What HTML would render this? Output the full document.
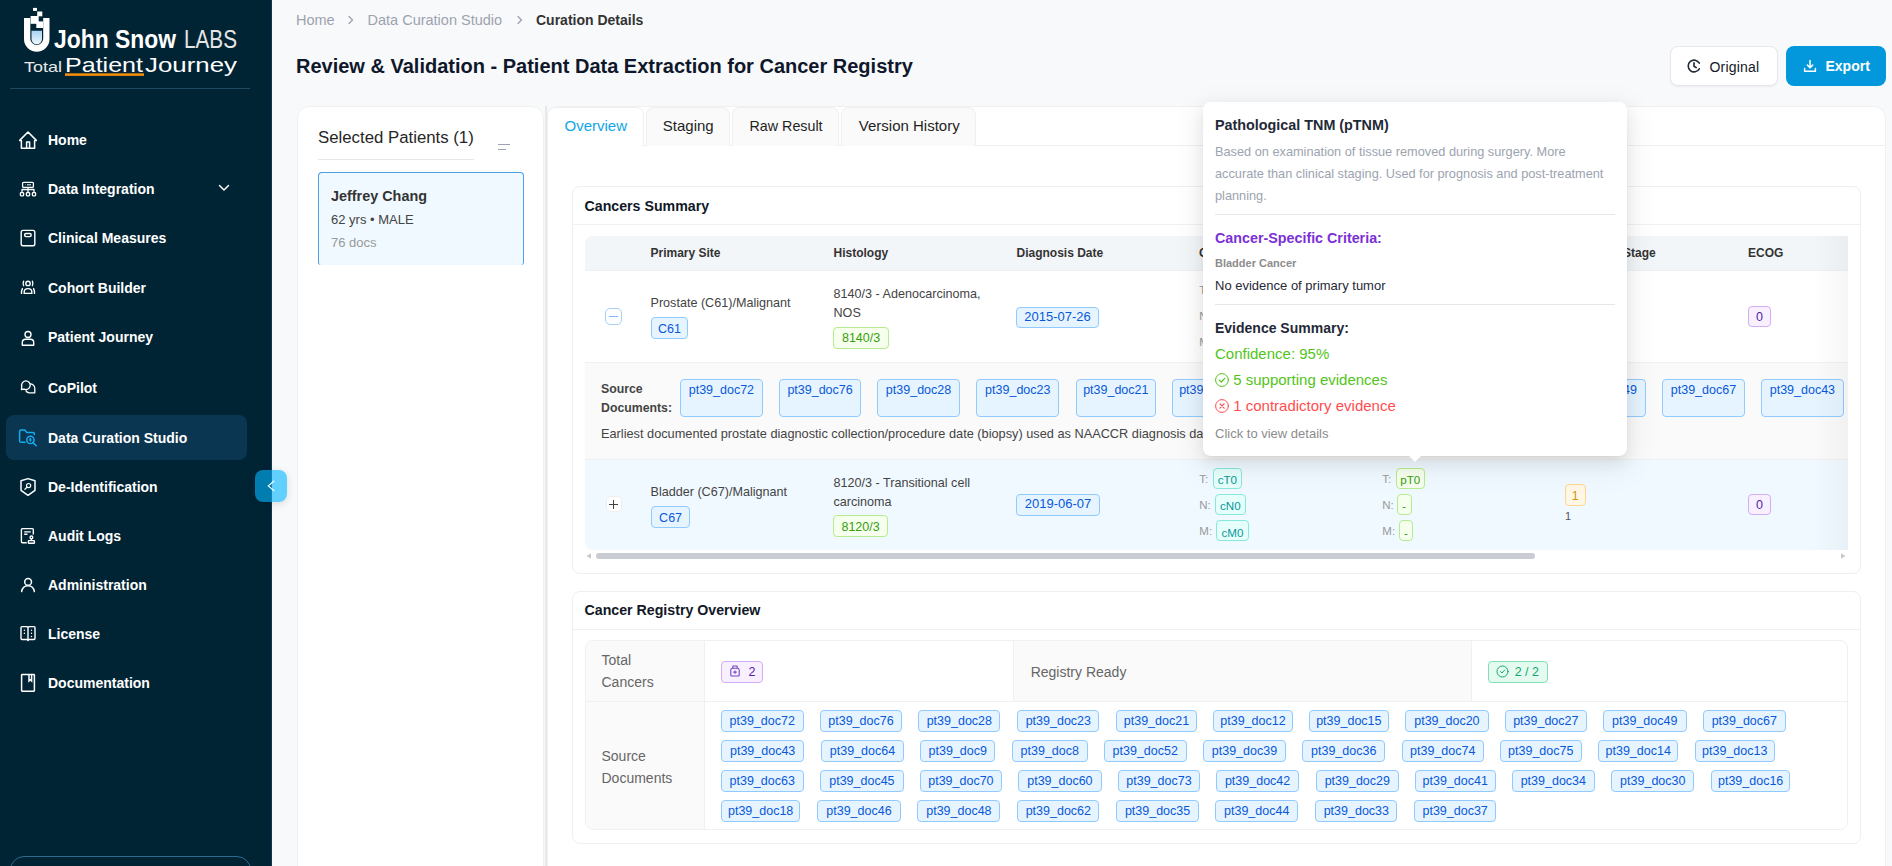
<!DOCTYPE html>
<html><head><meta charset="utf-8">
<style>
*{box-sizing:border-box;margin:0;padding:0}
html,body{width:1892px;height:866px;overflow:hidden}
body{font-family:"Liberation Sans",sans-serif;background:#f8f9fb;position:relative;color:#333}
.a{position:absolute;white-space:nowrap;line-height:1}
#sb{position:absolute;left:0;top:0;width:272px;height:866px;background:#012435;border-right:1px solid #0d3a52}
.mi{position:absolute;left:48px;font-size:14px;font-weight:700;color:#fff}
.ic{position:absolute;left:19px;width:18px;height:18px}
/* SIDEBAR-END */
.bc{font-size:14.5px;color:#9ca3af}
.card{position:absolute;background:#fff;border:1px solid #efefef}
.tab{position:absolute;top:107px;height:39px;border:1px solid #f0f0f0;border-bottom:none;border-radius:8px 8px 0 0;background:#fafafa;font-size:15px;color:#1f1f1f}
.tab span{position:absolute;top:10.3px;line-height:1}

.tg{position:absolute;border:1px solid;border-radius:4px;font-size:12.5px;line-height:19.5px;padding-top:1.3px;text-align:center;white-space:nowrap;overflow:hidden}
.tb{background:#e6f4ff;border-color:#91caff;color:#0958d9}
.tgn{background:#f6ffed;border-color:#b7eb8f;color:#389e0d}
.tgc{background:#e6fffb;border-color:#87e8de;color:#08979c}
.tgo{background:#fff7e6;border-color:#ffd591;color:#d46b08}
.tgp{background:#f9f0ff;border-color:#d3adf7;color:#531dab}
.tgg{background:#e6fbf0;border-color:#80e0b4;color:#0fa86e}
.th{font-size:12px;font-weight:700;color:#333}
.td{font-size:12.6px;color:#444}
.lb{font-size:11.5px;color:#999}
.tgc,.tgs{font-size:11.6px}
.sdl{font-size:12.3px;font-weight:700;color:#444}
.rl{font-size:14px;color:#666}
/* MAIN-CSS */

</style></head><body>
<div id="sb">
  <svg class="a" style="left:0;top:0" width="272" height="90" viewBox="0 0 272 90">
    <defs><linearGradient id="tg" x1="0" y1="0" x2="0" y2="1"><stop offset="0" stop-color="#a9d4f2"/><stop offset="1" stop-color="#eef8fd"/></linearGradient></defs>
    <path d="M24 18 H30.3 V38.5 A6.45 6.45 0 0 0 43.2 38.5 V18 H49.5 V39 A12.75 12.75 0 0 1 24 39 Z" fill="#fff"/>
    <path d="M31.5 30.7 H42 V39 A5.25 5.25 0 0 1 31.5 39 Z" fill="url(#tg)"/>
    <rect x="33" y="7.9" width="4" height="3" fill="#fff"/>
    <rect x="37.2" y="11.5" width="5.1" height="4.8" fill="#fff"/>
    <rect x="30.6" y="16" width="8.1" height="7.8" fill="#fff"/>
    <rect x="36.3" y="21.4" width="6.7" height="6.6" fill="#fff"/>
    <text x="54" y="48" font-family="Liberation Sans" font-weight="700" font-size="26" fill="#fff" textLength="122" lengthAdjust="spacingAndGlyphs">John Snow</text>
    <text x="184" y="48" font-family="Liberation Sans" font-weight="400" font-size="26" fill="#e6e6e6" textLength="53" lengthAdjust="spacingAndGlyphs">LABS</text>
    <text x="24" y="72" font-family="Liberation Sans" font-size="15" fill="#e8e8e8" textLength="38" lengthAdjust="spacingAndGlyphs">Total</text>
    <text x="65" y="72" font-family="Liberation Sans" font-size="21" fill="#fff" textLength="78" lengthAdjust="spacingAndGlyphs">Patient</text>
    <text x="145" y="72" font-family="Liberation Sans" font-size="21" fill="#fff" textLength="92" lengthAdjust="spacingAndGlyphs">Journey</text>
    <rect x="65" y="73.3" width="79" height="2.6" fill="#f28b0c"/>
    <rect x="10" y="88" width="240" height="1" fill="#1b4a62"/>
  </svg>
  <div class="a" style="left:6px;top:415px;width:241px;height:45px;border-radius:8px;background:#0b3651"></div>
  <div class="a mi" style="top:133px">Home</div>
  <div class="a mi" style="top:182px">Data Integration</div>
  <div class="a mi" style="top:231px">Clinical Measures</div>
  <div class="a mi" style="top:281px">Cohort Builder</div>
  <div class="a mi" style="top:330px">Patient Journey</div>
  <div class="a mi" style="top:381px">CoPilot</div>
  <div class="a mi" style="top:431px">Data Curation Studio</div>
  <div class="a mi" style="top:480px">De-Identification</div>
  <div class="a mi" style="top:529px">Audit Logs</div>
  <div class="a mi" style="top:578px">Administration</div>
  <div class="a mi" style="top:627px">License</div>
  <div class="a mi" style="top:676px">Documentation</div>

  <svg class="a" style="left:14px;top:126px" width="30" height="30" fill="none" stroke="#fff" stroke-width="1.5" stroke-linejoin="round"><path d="M5.7 14.4 L14 6 L22.3 14.4 H20.6 V22.2 H7.4 V14.4 Z"/><path d="M12.6 22.4 V16 H15.6 V22.4"/></svg>
  <svg class="a" style="left:14px;top:175px" width="30" height="30" fill="none" stroke="#fff" stroke-width="1.4" stroke-linejoin="round"><rect x="8.6" y="7.3" width="10.8" height="5" rx="0.9" stroke-width="1.3"/><path d="M11.2 9.8 H11.7 M13 9.8 H17" stroke-width="1"/><path d="M14 12.3 V17.6 M8 17.6 V14.5 H20 V17.6" stroke-width="1.3"/><rect x="6.4" y="17.6" width="3.2" height="3.2" rx="0.7" stroke-width="1.3"/><rect x="12.4" y="17.6" width="3.2" height="3.2" rx="0.7" stroke-width="1.3"/><rect x="18.4" y="17.6" width="3.2" height="3.2" rx="0.7" stroke-width="1.3"/></svg>
  <svg class="a" style="left:14px;top:224px" width="30" height="30" fill="none" stroke="#fff" stroke-width="1.4"><rect x="7.2" y="6.4" width="13.6" height="15.3" rx="1.8"/><rect x="10.6" y="9.5" width="6.6" height="3.1" rx="1.5"/></svg>
  <svg class="a" style="left:14px;top:273px" width="30" height="30" fill="none" stroke="#fff" stroke-width="1.4" stroke-linecap="round"><circle cx="14" cy="10.4" r="2.2"/><path d="M9.6 8.2 Q8.6 10.4 9.6 12.6 M18.4 8.2 Q19.4 10.4 18.4 12.6"/><path d="M10.2 20.4 V19 Q10.2 15.6 14 15.6 Q17.8 15.6 17.8 19 V20.4 Z"/><path d="M8.4 15.6 Q7.4 17.5 7.5 20.4 M19.6 15.6 Q20.6 17.5 20.5 20.4"/></svg>
  <svg class="a" style="left:14px;top:322px" width="30" height="30" fill="none" stroke="#fff" stroke-width="1.4" stroke-linejoin="round"><circle cx="14" cy="12.5" r="3"/><path d="M8.3 23.3 V20.6 Q8.3 17.2 11.6 17.2 H16.4 Q19.7 17.2 19.7 20.6 V23.3 Z"/></svg>
  <svg class="a" style="left:14px;top:373px" width="30" height="30" fill="none" stroke="#fff" stroke-width="1.3" stroke-linejoin="round"><path d="M7.4 16.5 L7.8 13.5 A4.3 4.3 0 1 1 10.3 16.2 Z"/><path d="M15.8 10.8 A4.6 4.6 0 0 1 20.8 15.2 L20.8 19.8 L16.5 19.8 A4.6 4.6 0 0 1 11.6 17.4"/></svg>
  <svg class="a" style="left:14px;top:423px" width="30" height="30" fill="none" stroke="#14aef0" stroke-width="1.5" stroke-linecap="round" stroke-linejoin="round"><path d="M11 19.3 H7.2 Q5.6 19.3 5.6 17.7 V8.6 Q5.6 7 7.2 7 H10.8 L12.6 9.4 H18.8 Q20.4 9.4 20.4 11 V11.6"/><circle cx="16.4" cy="16.9" r="3.6"/><path d="M19 19.6 L22.2 22.8"/><path d="M16.4 15.2 L17.2 16.9 L16.4 18.6 L15.6 16.9 Z" fill="#14aef0" stroke-width="0.8"/></svg>
  <svg class="a" style="left:14px;top:472px" width="30" height="30" fill="none" stroke="#fff" stroke-width="1.5" stroke-linejoin="round"><path d="M14 6.6 L21 8.7 V18.3 L14 23.3 L7 18.3 V8.7 Z"/><circle cx="14.6" cy="13.6" r="2.1" stroke-width="1.2"/><path d="M13 15.3 L10.9 17.3" stroke-width="1.2" stroke-linecap="round"/></svg>
  <svg class="a" style="left:14px;top:521px" width="30" height="30" fill="none" stroke="#fff" stroke-width="1.4"><path d="M19.3 13.6 V8.6 Q19.3 7.6 18.3 7.6 H8.4 Q7.4 7.6 7.4 8.6 V20.8 Q7.4 21.8 8.4 21.8 H12.8"/><path d="M10.2 10.9 H16.8 M10.2 13.3 H13.5"/><circle cx="17.4" cy="16.4" r="1.4"/><path d="M17.4 17.8 V19.4"/><rect x="14.4" y="19.6" width="6" height="2.7" rx="0.5"/></svg>
  <svg class="a" style="left:14px;top:570px" width="30" height="30" fill="none" stroke="#fff" stroke-width="1.5" stroke-linecap="round"><circle cx="14.1" cy="11.9" r="3.4"/><path d="M7.6 21.6 Q8.6 15.7 14 15.7 Q19.4 15.7 20.4 21.6"/></svg>
  <svg class="a" style="left:14px;top:619px" width="30" height="30" fill="none" stroke="#fff" stroke-width="1.4" stroke-linejoin="round"><path d="M7 8.5 Q7 7.6 8 7.6 H12.8 L14 8.3 L15.2 7.6 H20 Q21 7.6 21 8.5 V19.6 Q21 20.5 20 20.5 H15 L14 21.4 L13 20.5 H8 Q7 20.5 7 19.6 Z M14 8.3 V21"/><path d="M10.4 11.1 V11.3 M10.4 14.2 V14.4 M17.5 11.1 V11.3 M17.5 14.2 V14.4 M17.5 17.3 V17.5" stroke-linecap="round" stroke-width="1.3"/></svg>
  <svg class="a" style="left:14px;top:668px" width="30" height="30" fill="none" stroke="#fff" stroke-width="1.5"><rect x="7.6" y="6.6" width="12.8" height="16.6" rx="0.6"/><path d="M15 6.8 V13 L16.3 11.8 L17.6 13 V6.8"/></svg>
  <svg class="a" style="left:216px;top:182px" width="16" height="12" fill="none" stroke="#fff" stroke-width="1.5" stroke-linecap="round" stroke-linejoin="round"><path d="M3.5 3.5 L8 8 L12.5 3.5"/></svg>
  <div class="a" style="left:255px;top:470px;width:32px;height:32px;border-radius:8px;background:rgba(4,181,255,0.61);box-shadow:0 2px 8px rgba(0,0,0,0.12)"><svg width="32" height="32" fill="none" stroke="#fff" stroke-width="1.2" stroke-linecap="round" stroke-linejoin="round"><path d="M18.8 11.2 L13.2 15.9 L18.8 20.5"/></svg></div>
  <div class="a" style="left:10px;top:856px;width:241px;height:40px;border:1px solid #2d6a8e;border-radius:14px"></div>
</div>
<!-- MAIN -->
<div class="a bc" style="left:296px;top:13px">Home</div>
<svg class="a" style="left:344px;top:13px" width="14" height="14" fill="none" stroke="#9ca3af" stroke-width="1.3" stroke-linecap="round" stroke-linejoin="round"><path d="M5 3.5 L8.5 7 L5 10.5"/></svg>
<div class="a bc" style="left:367.5px;top:13px">Data Curation Studio</div>
<svg class="a" style="left:513px;top:13px" width="14" height="14" fill="none" stroke="#9ca3af" stroke-width="1.3" stroke-linecap="round" stroke-linejoin="round"><path d="M5 3.5 L8.5 7 L5 10.5"/></svg>
<div class="a" style="left:536px;top:13px;font-size:14px;font-weight:700;color:#333">Curation Details</div>
<div class="a" style="left:296px;top:56px;font-size:20px;font-weight:700;color:#0f172a">Review &amp; Validation - Patient Data Extraction for Cancer Registry</div>
<div class="a" style="left:1670px;top:46px;width:107.5px;height:39.5px;background:#fff;border:1px solid #e5e7eb;border-radius:8px;box-shadow:0 1px 2px rgba(0,0,0,0.05)">
  <svg class="a" style="left:15px;top:11px" width="16" height="16" fill="none" stroke="#1f2937" stroke-width="1.6" stroke-linecap="round"><path d="M13.3 5.2 A5.9 5.9 0 1 0 13.3 10.8"/><path d="M8 4.8 V8.3 L10.2 9.6"/></svg>
  <div class="a" style="left:38.5px;top:13px;font-size:14px;font-weight:400;color:#111827;letter-spacing:0.2px">Original</div>
</div>
<div class="a" style="left:1786px;top:46px;width:100px;height:39.5px;background:#0398db;border-radius:8px">
  <svg class="a" style="left:16px;top:12px" width="16" height="16" fill="none" stroke="#fff" stroke-width="1.5" stroke-linecap="round" stroke-linejoin="round"><path d="M8 2.5 V9.5 M5.3 7 L8 9.7 L10.7 7"/><path d="M2.6 10.5 V13.3 H13.4 V10.5"/></svg>
  <div class="a" style="left:39.5px;top:13px;font-size:14px;font-weight:700;color:#fff">Export</div>
</div>
<!-- patient panel -->
<div class="card" style="left:296.8px;top:106px;width:247.7px;height:800px;border-radius:12px;border-color:#f0f0f0"></div>
<div class="a" style="left:318px;top:130px;font-size:16.8px;color:#262626">Selected Patients (1)</div>
<div class="a" style="left:318px;top:158.5px;width:156px;height:1px;background:#e5e7eb"></div>
<div class="a" style="left:498px;top:144px;width:12px;height:1.3px;background:#9aa4b2"></div>
<div class="a" style="left:498px;top:148.7px;width:8px;height:1.3px;background:#9aa4b2"></div>
<div class="a" style="left:318px;top:172px;width:206px;height:93px;background:#f0f9ff;border:1px solid #4a9fe6;border-bottom:none;border-radius:4px 4px 3px 3px"></div>
<div class="a" style="left:331px;top:189px;font-size:14.4px;font-weight:700;color:#333">Jeffrey Chang</div>
<div class="a" style="left:331px;top:212.6px;font-size:13px;color:#444">62 yrs &bull; MALE</div>
<div class="a" style="left:331px;top:236px;font-size:13px;color:#999">76 docs</div>
<div class="a" style="left:545px;top:106px;width:1.5px;height:760px;background:#e6e8eb"></div>
<!-- tabs card -->
<div class="card" style="left:547px;top:106px;width:1339px;height:800px;border-radius:12px;border-color:#f0f0f0"></div>
<div class="a" style="left:547px;top:145px;width:1338px;height:1px;background:#f0f0f0"></div>
<div class="tab" style="left:547px;width:97px;background:#fff;border-color:#f0f0f0;height:40px"><span style="left:16.5px;color:#0ea5e9">Overview</span></div><div class="a" style="left:548px;top:145px;width:95px;height:2px;background:#fff"></div>
<div class="tab" style="left:646px;width:84px"><span style="left:15.8px">Staging</span></div>
<div class="tab" style="left:732px;width:107px"><span style="left:16.5px;font-size:14.3px;top:10.9px">Raw Result</span></div>
<div class="tab" style="left:841px;width:135px"><span style="left:16.8px">Version History</span></div>
<!-- CONTENT-START -->
<div class="card" style="left:571.5px;top:186px;width:1289px;height:387.5px;border-radius:8px"></div>
<div class="a" style="left:584.5px;top:198.5px;font-size:14.2px;font-weight:700;color:#111827">Cancers Summary</div>
<div class="a" style="left:572.5px;top:224px;width:1287px;height:1px;background:#f0f0f0"></div>
<div class="a" style="left:584.5px;top:236.3px;width:1263.5px;height:313.7px;overflow:hidden;border-radius:8px 0 0 8px">
<div class="a" style="left:0;top:0;width:1263.5px;height:35.2px;background:#f3f6f9;border-bottom:1px solid #eef0f2"></div>
<div class="a th" style="left:66.0px;top:10.7px">Primary Site</div>
<div class="a th" style="left:249.0px;top:10.7px">Histology</div>
<div class="a th" style="left:432.0px;top:10.7px">Diagnosis Date</div>
<div class="a th" style="left:614.5px;top:10.7px">Clinical TNM</div>
<div class="a th" style="left:797.5px;top:10.7px">Pathological TNM</div>
<div class="a th" style="left:980.5px;top:10.7px">Summary Stage</div>
<div class="a th" style="left:1163.5px;top:10.7px">ECOG</div>
<div class="a" style="left:0;top:35.2px;width:1263.5px;height:91.5px;background:#fff;border-bottom:1px solid #f0f0f0"></div>
<div class="a" style="left:20.8px;top:71.7px;width:16.5px;height:16.6px;border:1px solid #a8cffc;border-radius:5px;background:#fff"><div class="a" style="left:2.8px;top:7.2px;width:9px;height:1.3px;background:#80b6f6"></div></div>
<div class="a td" style="left:66.0px;top:60.7px">Prostate (C61)/Malignant</div>
<div class="tg tb" style="left:66.5px;top:81.0px;width:37px;height:21.5px;">C61</div>
<div class="a td" style="left:249.0px;top:52.0px">8140/3 - Adenocarcinoma,</div>
<div class="a td" style="left:249.0px;top:71.0px">NOS</div>
<div class="tg tgn" style="left:248.9px;top:90.9px;width:55.4px;height:21.6px;">8140/3</div>
<div class="tg tb" style="left:431.9px;top:70.3px;width:82.2px;height:21.2px;font-size:13px;padding-top:0;line-height:18.6px">2015-07-26</div>
<div class="a lb" style="left:614.8px;top:48.3px">T:</div>
<div class="a lb" style="left:614.8px;top:74.3px">N:</div>
<div class="a lb" style="left:614.8px;top:100.3px">M:</div>
<div class="tg tgp" style="left:1163.5px;top:69.4px;width:23px;height:21.6px;">0</div>
<div class="a" style="left:0;top:126.7px;width:1263.5px;height:96.8px;background:#fafafa;border-bottom:1px solid #f0f0f0"></div>
<div class="a sdl" style="left:16.5px;top:146.9px">Source</div>
<div class="a sdl" style="left:16.5px;top:165.9px">Documents:</div>
<div class="tg tb tgt" style="left:95.6px;top:142.9px;width:82.6px;height:37.5px;">pt39_doc72</div>
<div class="tg tb tgt" style="left:194.8px;top:142.9px;width:81.5px;height:37.5px;">pt39_doc76</div>
<div class="tg tb tgt" style="left:292.7px;top:142.9px;width:82.7px;height:37.5px;">pt39_doc28</div>
<div class="tg tb tgt" style="left:391.7px;top:142.9px;width:83.2px;height:37.5px;">pt39_doc23</div>
<div class="tg tb tgt" style="left:491.5px;top:142.9px;width:79.6px;height:37.5px;">pt39_doc21</div>
<div class="tg tb tgt" style="left:587.7px;top:142.9px;width:79.3px;height:37.5px;">pt39_doc12</div>
<div class="tg tb tgt" style="left:683.5px;top:142.9px;width:79.7px;height:37.5px;">pt39_doc15</div>
<div class="tg tb tgt" style="left:779.8px;top:142.9px;width:83.4px;height:37.5px;">pt39_doc20</div>
<div class="tg tb tgt" style="left:879.8px;top:142.9px;width:81.6px;height:37.5px;">pt39_doc27</div>
<div class="tg tb tgt" style="left:978.0px;top:142.9px;width:83.5px;height:37.5px;">pt39_doc49</div>
<div class="tg tb tgt" style="left:1077.5px;top:142.9px;width:82.9px;height:37.5px;">pt39_doc67</div>
<div class="tg tb tgt" style="left:1176.5px;top:142.9px;width:82.8px;height:37.5px;">pt39_doc43</div>
<div class="a td" style="left:16.5px;top:191.9px;font-size:12.75px">Earliest documented prostate diagnostic collection/procedure date (biopsy) used as NAACCR diagnosis date</div>
<div class="a" style="left:0;top:223.5px;width:1263.5px;height:90.2px;background:#f0f9ff"></div>
<div class="a" style="left:21.0px;top:260.0px;width:16px;height:16px;border:1px solid #efefef;border-radius:5px;background:#fff"><div class="a" style="left:2.6px;top:6.4px;width:8.8px;height:1.2px;background:#444"></div><div class="a" style="left:6.4px;top:2.6px;width:1.2px;height:8.8px;background:#444"></div></div>
<div class="a td" style="left:66.0px;top:250.1px">Bladder (C67)/Malignant</div>
<div class="tg tb" style="left:66.9px;top:270.0px;width:38.4px;height:21.6px;">C67</div>
<div class="a td" style="left:249.0px;top:240.9px">8120/3 - Transitional cell</div>
<div class="a td" style="left:249.0px;top:259.9px">carcinoma</div>
<div class="tg tgn" style="left:248.7px;top:279.1px;width:54.8px;height:21.2px;">8120/3</div>
<div class="tg tb" style="left:431.9px;top:258.1px;width:83.4px;height:21.3px;font-size:13px;padding-top:0;line-height:18.6px">2019-06-07</div>
<div class="a lb" style="left:614.8px;top:237.3px">T:</div>
<div class="tg tgc" style="left:628.5px;top:231.7px;width:28.7px;height:21.2px;">cT0</div>
<div class="a lb" style="left:614.8px;top:263.45px">N:</div>
<div class="tg tgc" style="left:630.5px;top:257.85px;width:30.6px;height:21.2px;">cN0</div>
<div class="a lb" style="left:614.8px;top:289.6px">M:</div>
<div class="tg tgc" style="left:631.5px;top:284.0px;width:32.8px;height:21.2px;">cM0</div>
<div class="a lb" style="left:797.8px;top:237.3px">T:</div>
<div class="tg tgn tgs" style="left:811.5px;top:231.7px;width:28.6px;height:21.2px;">pT0</div>
<div class="a lb" style="left:797.8px;top:263.45px">N:</div>
<div class="tg tgn tgs" style="left:812.5px;top:257.85px;width:14.6px;height:21.2px;">-</div>
<div class="a lb" style="left:797.8px;top:289.6px">M:</div>
<div class="tg tgn tgs" style="left:814.1px;top:284.0px;width:14.6px;height:21.2px;">-</div>
<div class="tg tgo" style="left:980.2px;top:248.0px;width:21.3px;height:21.8px;color:#d8900f">1</div>
<div class="a" style="left:980.5px;top:275.0px;font-size:11px;color:#555">1</div>
<div class="tg tgp" style="left:1163.5px;top:257.4px;width:23px;height:21.6px;">0</div>
<div class="a" style="left:1228px;top:0;width:36px;height:314px;background:linear-gradient(to right,rgba(0,0,0,0),rgba(0,0,0,0.035))"></div>
</div>
<div class="a" style="left:595.7px;top:553px;width:939.5px;height:6.2px;border-radius:3.1px;background:#c9ccd2"></div>
<svg class="a" style="left:584px;top:551px" width="10" height="10"><path d="M2.6 5 L7 2.2 V7.8 Z" fill="#c8c8c8"/></svg>
<svg class="a" style="left:1838px;top:551px" width="10" height="10"><path d="M7.4 5 L3 2.2 V7.8 Z" fill="#c8c8c8"/></svg>
<div class="card" style="left:571.5px;top:590.5px;width:1289px;height:253px;border-radius:8px"></div>
<div class="a" style="left:584.5px;top:602.5px;font-size:14.2px;font-weight:700;color:#111827">Cancer Registry Overview</div>
<div class="a" style="left:572.5px;top:628.5px;width:1287px;height:1px;background:#f0f0f0"></div>
<div class="a" style="left:584.5px;top:640.4px;width:1263.5px;height:190px;border:1px solid #f0f0f0;border-radius:8px;overflow:hidden;background:#fff">
<div class="a" style="left:0;top:0;width:119.0px;height:188px;background:#fafafa;border-right:1px solid #f0f0f0"></div>
<div class="a" style="left:427.7px;top:0;width:458.8px;height:60.0px;background:#fafafa;border-left:1px solid #f0f0f0;border-right:1px solid #f0f0f0"></div>
<div class="a" style="left:0;top:59.6px;width:1262px;height:1px;background:#f0f0f0"></div>
<div class="a rl" style="left:16.0px;top:12.1px">Total</div>
<div class="a rl" style="left:16.0px;top:34.1px">Cancers</div>
<div class="a rl" style="left:445.2px;top:23.6px">Registry Ready</div>
<div class="a rl" style="left:16.0px;top:107.2px">Source</div>
<div class="a rl" style="left:16.0px;top:129.2px">Documents</div>
<div class="tg tgp" style="left:135.6px;top:19.7px;width:41.8px;height:21.8px;text-align:left;padding:0"><svg style="position:absolute;left:7px;top:3px" width="12" height="12" fill="none" stroke="#7046c4" stroke-width="1.1" stroke-linejoin="round"><path d="M1.8 5 Q1.8 3.2 3.6 3.2 H8.4 Q10.2 3.2 10.2 5 V10.2 Q10.2 11 9.4 11 H2.6 Q1.8 11 1.8 10.2 Z"/><path d="M3.9 3.2 V1 H8.1 V3.2"/><path d="M6 5.4 V8.8 M4.3 7.1 H7.7" stroke-width="1.1"/></svg><span style="position:absolute;left:26.3px;top:3.5px;line-height:1">2</span></div>
<div class="tg tgg" style="left:902.6px;top:19.6px;width:59.8px;height:21.9px;text-align:left;padding:0"><svg style="position:absolute;left:6.5px;top:3.3px" width="13" height="13" fill="none" stroke="#10a870" stroke-width="1" stroke-linecap="round" stroke-linejoin="round"><circle cx="6.5" cy="6.5" r="5.5"/><path d="M4.5 6.6 L6 8 L8.6 5.1"/></svg><span style="position:absolute;left:25.6px;top:4.3px;line-height:1">2 / 2</span></div>
<div class="tg tb" style="left:135.3px;top:68.8px;width:82.8px;height:21.4px;">pt39_doc72</div>
<div class="tg tb" style="left:234.7px;top:68.8px;width:81.5px;height:21.4px;">pt39_doc76</div>
<div class="tg tb" style="left:332.8px;top:68.8px;width:82.1px;height:21.4px;">pt39_doc28</div>
<div class="tg tb" style="left:431.8px;top:68.8px;width:82.1px;height:21.4px;">pt39_doc23</div>
<div class="tg tb" style="left:530.8px;top:68.8px;width:80.3px;height:21.4px;">pt39_doc21</div>
<div class="tg tb" style="left:627.8px;top:68.8px;width:79.3px;height:21.4px;">pt39_doc12</div>
<div class="tg tb" style="left:723.5px;top:68.8px;width:79.7px;height:21.4px;">pt39_doc15</div>
<div class="tg tb" style="left:819.7px;top:68.8px;width:83.4px;height:21.4px;">pt39_doc20</div>
<div class="tg tb" style="left:919.5px;top:68.8px;width:81.6px;height:21.4px;">pt39_doc27</div>
<div class="tg tb" style="left:1017.5px;top:68.8px;width:83.5px;height:21.4px;">pt39_doc49</div>
<div class="tg tb" style="left:1117.5px;top:68.8px;width:82.6px;height:21.4px;">pt39_doc67</div>
<div class="tg tb" style="left:135.3px;top:98.8px;width:83.7px;height:21.4px;">pt39_doc43</div>
<div class="tg tb" style="left:235.9px;top:98.8px;width:82.2px;height:21.4px;">pt39_doc64</div>
<div class="tg tb" style="left:334.6px;top:98.8px;width:75.4px;height:21.4px;">pt39_doc9</div>
<div class="tg tb" style="left:426.5px;top:98.8px;width:75.5px;height:21.4px;">pt39_doc8</div>
<div class="tg tb" style="left:518.5px;top:98.8px;width:82.5px;height:21.4px;">pt39_doc52</div>
<div class="tg tb" style="left:617.8px;top:98.8px;width:82.3px;height:21.4px;">pt39_doc39</div>
<div class="tg tb" style="left:716.5px;top:98.8px;width:83.4px;height:21.4px;">pt39_doc36</div>
<div class="tg tb" style="left:816.5px;top:98.8px;width:81.5px;height:21.4px;">pt39_doc74</div>
<div class="tg tb" style="left:914.5px;top:98.8px;width:81.5px;height:21.4px;">pt39_doc75</div>
<div class="tg tb" style="left:1012.5px;top:98.8px;width:80.4px;height:21.4px;">pt39_doc14</div>
<div class="tg tb" style="left:1109.4px;top:98.8px;width:79.7px;height:21.4px;">pt39_doc13</div>
<div class="tg tb" style="left:135.3px;top:128.8px;width:82.8px;height:21.4px;">pt39_doc63</div>
<div class="tg tb" style="left:234.7px;top:128.8px;width:83.4px;height:21.4px;">pt39_doc45</div>
<div class="tg tb" style="left:334.6px;top:128.8px;width:81.6px;height:21.4px;">pt39_doc70</div>
<div class="tg tb" style="left:432.7px;top:128.8px;width:83.4px;height:21.4px;">pt39_doc60</div>
<div class="tg tb" style="left:532.7px;top:128.8px;width:81.5px;height:21.4px;">pt39_doc73</div>
<div class="tg tb" style="left:630.2px;top:128.8px;width:83.8px;height:21.4px;">pt39_doc42</div>
<div class="tg tb" style="left:730.5px;top:128.8px;width:82.6px;height:21.4px;">pt39_doc29</div>
<div class="tg tb" style="left:829.5px;top:128.8px;width:80.5px;height:21.4px;">pt39_doc41</div>
<div class="tg tb" style="left:926.5px;top:128.8px;width:82.7px;height:21.4px;">pt39_doc34</div>
<div class="tg tb" style="left:1025.6px;top:128.8px;width:83.4px;height:21.4px;">pt39_doc30</div>
<div class="tg tb" style="left:1125.5px;top:128.8px;width:79.3px;height:21.4px;">pt39_doc16</div>
<div class="tg tb" style="left:135.3px;top:158.8px;width:79.7px;height:21.4px;">pt39_doc18</div>
<div class="tg tb" style="left:231.6px;top:158.8px;width:83.7px;height:21.4px;">pt39_doc46</div>
<div class="tg tb" style="left:331.9px;top:158.8px;width:83px;height:21.4px;">pt39_doc48</div>
<div class="tg tb" style="left:431.8px;top:158.8px;width:82.1px;height:21.4px;">pt39_doc62</div>
<div class="tg tb" style="left:530.8px;top:158.8px;width:82.5px;height:21.4px;">pt39_doc35</div>
<div class="tg tb" style="left:629.5px;top:158.8px;width:83.4px;height:21.4px;">pt39_doc44</div>
<div class="tg tb" style="left:729.7px;top:158.8px;width:82.3px;height:21.4px;">pt39_doc33</div>
<div class="tg tb" style="left:828.5px;top:158.8px;width:82.3px;height:21.4px;">pt39_doc37</div>
</div>
<!-- CONTENT-END -->
<!-- TOOLTIP-START -->
<div class="a" style="left:1203px;top:102px;width:424px;height:354px;background:#fff;border-radius:8px;box-shadow:0 6px 16px 0 rgba(0,0,0,0.08),0 3px 6px -4px rgba(0,0,0,0.12),0 9px 28px 8px rgba(0,0,0,0.05);z-index:10">
  <div class="a" style="left:12px;top:16.2px;font-size:14.35px;font-weight:700;color:#1f2937">Pathological TNM (pTNM)</div>
  <div class="a" style="left:12px;top:43.8px;font-size:12.75px;color:#9ca3af">Based on examination of tissue removed during surgery. More</div>
  <div class="a" style="left:12px;top:65.8px;font-size:12.75px;color:#9ca3af">accurate than clinical staging. Used for prognosis and post-treatment</div>
  <div class="a" style="left:12px;top:87.8px;font-size:12.75px;color:#9ca3af">planning.</div>
  <div class="a" style="left:12px;top:112.2px;width:400px;height:1px;background:#e5e7eb"></div>
  <div class="a" style="left:12px;top:129.4px;font-size:14.3px;font-weight:700;color:#7b2fd6">Cancer-Specific Criteria:</div>
  <div class="a" style="left:12px;top:156.3px;font-size:11px;font-weight:700;color:#8c8c8c">Bladder Cancer</div>
  <div class="a" style="left:12px;top:177.4px;font-size:13px;color:#1f2937">No evidence of primary tumor</div>
  <div class="a" style="left:12px;top:201.7px;width:400px;height:1px;background:#e5e7eb"></div>
  <div class="a" style="left:12px;top:218.9px;font-size:14px;font-weight:700;color:#1f2937">Evidence Summary:</div>
  <div class="a" style="left:12px;top:244.3px;font-size:15px;color:#52c41a">Confidence: 95%</div>
  <svg class="a" style="left:11px;top:270px" width="16" height="16" fill="none" stroke="#52c41a" stroke-width="1" stroke-linecap="round" stroke-linejoin="round"><circle cx="8" cy="8" r="6.4"/><path d="M5.3 8.1 L7.3 10 L10.7 6.3" stroke-width="1.2"/></svg>
  <div class="a" style="left:30.2px;top:270px;font-size:15px;color:#52c41a">5 supporting evidences</div>
  <svg class="a" style="left:11px;top:296px" width="16" height="16" fill="none" stroke="#ff4d4f" stroke-width="1" stroke-linecap="round"><circle cx="8" cy="8" r="6.4"/><path d="M5.9 5.9 L10.1 10.1 M10.1 5.9 L5.9 10.1" stroke-width="1.2"/></svg>
  <div class="a" style="left:30.2px;top:296.1px;font-size:15px;color:#ff4d4f">1 contradictory evidence</div>
  <div class="a" style="left:12px;top:324.7px;font-size:13px;color:#8c8c8c">Click to view details</div>
</div>
<svg class="a" style="left:1403px;top:454px;z-index:11" width="24" height="10"><path d="M4 0 L12 8 L20 0 Z" fill="#fff"/></svg>
<!-- TOOLTIP-END -->

</body></html>
